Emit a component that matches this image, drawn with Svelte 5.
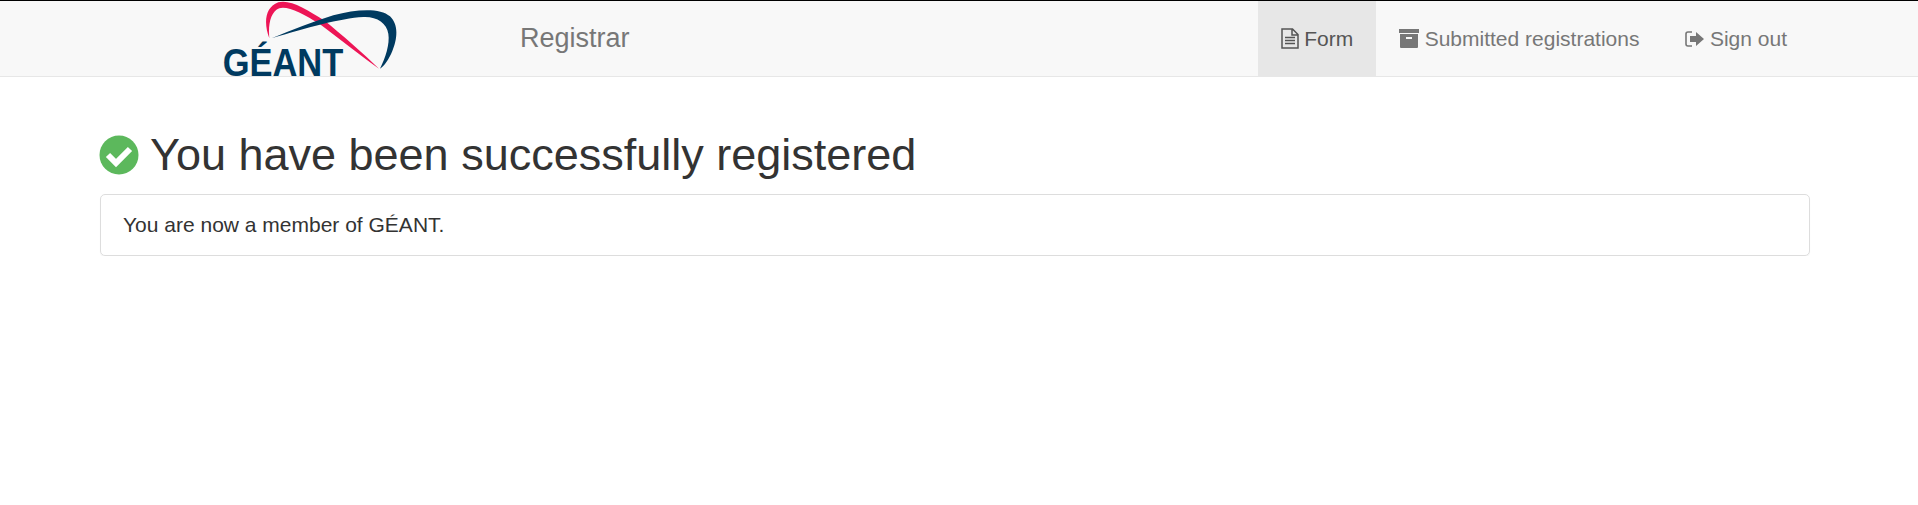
<script>
  let items = [
    { label: 'Form', icon: 'file', active: true },
    { label: 'Submitted registrations', icon: 'box' },
    { label: 'Sign out', icon: 'out' }
  ];
</script>

<header class="navbar">
  <a class="logo" href="#top" aria-label="GÉANT">
    <svg width="180" height="76" viewBox="60 0 540 228">
      <path fill="#ed1556" d="M208 112C192 70 192 20 235 4C270-6 320 25 372 58C422 98 492 160 537 203C490 170 420 116 360 70C310 38 262 14 238 22C212 32 204 70 208 112Z"/>
      <path fill="#003a60" d="M215 112C280 85 340 62 400 43C470 24 540 20 570 46C597 72 592 115 577 150C566 176 553 195 540 203C556 170 570 130 565 98C560 66 530 46 490 48C420 52 320 80 215 112Z"/>
      <text class="word" x="68" y="225" textLength="362" lengthAdjust="spacingAndGlyphs">GÉANT</text>
    </svg>
  </a>
  <a class="brand" href="#top">Registrar</a>
  <nav>
    {#each items as item}
      <a class="link" class:active={item.active} href="#top">
        {#if item.icon === 'file'}
          <svg width="18" height="21" viewBox="0 0 18 21">
            <path fill="none" stroke="currentColor" stroke-width="1.5" d="M1 1h10.5l5.5 5.5V20H1zM11 1v6h6"/>
            <path stroke="currentColor" stroke-width="1.3" d="M4 9.5h10M4 12.5h10M4 15.5h10"/>
          </svg>
        {:else if item.icon === 'box'}
          <svg width="20" height="19" viewBox="0 0 20 19">
            <path fill="currentColor" d="M0 0h20v4H0zM1 5h18v13a1 1 0 0 1-1 1H2a1 1 0 0 1-1-1zm6 3v2h6V8z"/>
          </svg>
        {:else}
          <svg width="19" height="16" viewBox="0 0 19 16">
            <path fill="none" stroke="currentColor" stroke-width="1.6" d="M7 1H3a2 2 0 0 0-2 2v10a2 2 0 0 0 2 2h4"/>
            <path fill="currentColor" d="M5 5h6V1l8 7-8 7v-4H5z"/>
          </svg>
        {/if}
        <span>{item.label}</span>
      </a>
    {/each}
  </nav>
</header>

<main>
  <h1>
    <svg width="40" height="40" viewBox="0 0 40 40">
      <circle cx="20" cy="20" r="19.5" fill="#5cb85c"/>
      <path fill="none" stroke="#fff" stroke-width="6" d="M9 20l8 8 14-14"/>
    </svg>
    <span>You have been successfully registered</span>
  </h1>
  <section class="panel">You are now a member of GÉANT.</section>
</main>

<style>
  :global(body) { font-family: "Liberation Sans", Arial, sans-serif; background: #fff; color: #333; }
  a { text-decoration: none; }
  .navbar { display: flex; align-items: stretch; height: 75px; background: #f8f8f8; border-top: 1px solid #000; border-bottom: 1px solid #e7e7e7; }
  .logo { display: block; margin-left: 220px; width: 180px; height: 75px; }
  .logo svg { display: block; overflow: visible; }
  .word { font-family: "Liberation Sans", Arial, sans-serif; font-weight: 700; font-size: 118px; fill: #003a60; }
  .brand { margin-left: 120px; align-self: center; color: #777; font-size: 27px; }
  nav { display: flex; margin-left: auto; margin-right: 108px; }
  .link { display: flex; align-items: center; gap: 5.5px; padding: 0 23px; color: #777; font-size: 21px; }
  .link.active { background: #e7e7e7; color: #555; }
  main { padding: 0 108px 0 100px; }
  h1 { display: flex; align-items: center; gap: 11px; margin: 53px 0 14px -1px; font-size: 45px; font-weight: 400; line-height: 50px; color: #333; }
  h1 svg { flex: none; }
  .panel { height: 60px; display: flex; align-items: center; padding: 0 22px; border: 1px solid #ddd; border-radius: 5px; font-size: 21px; box-shadow: 0 1px 1px rgba(0,0,0,.05); }
</style>
